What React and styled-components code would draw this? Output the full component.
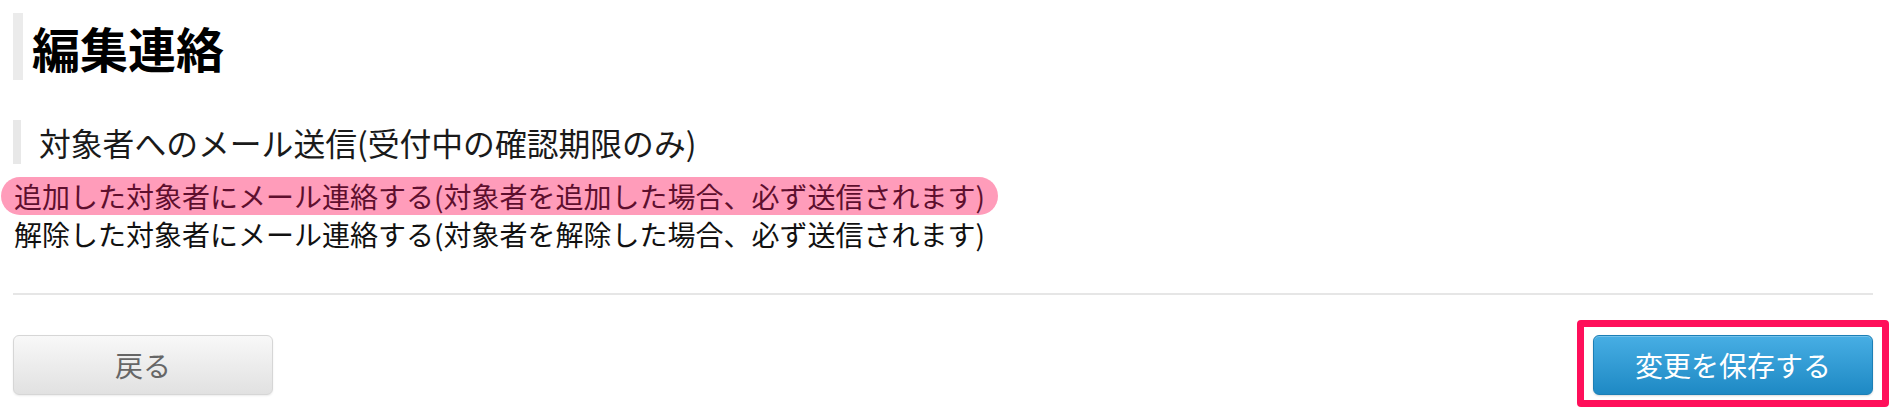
import React from "react";
import styled, { createGlobalStyle } from "styled-components";

const GlobalStyle = createGlobalStyle`
  html, body {
    margin: 0;
    padding: 0;
    background: #fff;
  }
  body {
    font-family: "Noto Sans CJK JP", "Noto Sans", sans-serif;
    color: #111;
  }
`;

const App = () => {
  return (
    <>
      <GlobalStyle />
      <Page>
        <Title>編集連絡</Title>
        <SubTitle>対象者へのメール送信(受付中の確認期限のみ)</SubTitle>
        <Options>
          <Option highlighted>
            追加した対象者にメール連絡する(対象者を追加した場合、必ず送信されます)
          </Option>
          <Option>
            解除した対象者にメール連絡する(対象者を解除した場合、必ず送信されます)
          </Option>
        </Options>
        <Divider />
        <Footer>
          <BackButton>戻る</BackButton>
          <Marked>
            <SaveButton>変更を保存する</SaveButton>
          </Marked>
        </Footer>
      </Page>
    </>
  );
};

export default App;

const Page = styled.div`
  box-sizing: border-box;
  height: 408px;
  padding: 13px 17px 0 13px;
  display: flex;
  flex-direction: column;
`;

const Title = styled.h1`
  margin: 0;
  height: 67px;
  border-left: 10px solid #ebebeb;
  padding-left: 9px;
  font-size: 48px;
  font-weight: 700;
  line-height: 69px;
  color: #000;
`;

const SubTitle = styled.h2`
  margin: 40px 0 0;
  height: 44px;
  border-left: 8px solid #e8e8e8;
  padding-left: 18px;
  font-size: 31.8px;
  font-weight: 400;
  line-height: 44px;
  color: #1a1a1a;
`;

const Options = styled.div`
  margin-top: 13px;
  display: flex;
  flex-direction: column;
  align-items: flex-start;
`;

const Option = styled.span`
  font-size: 28px;
  line-height: 38px;
  height: 38px;
  white-space: nowrap;
  color: ${(p) => (p.highlighted ? "#5e0f2e" : "#111")};
  background: ${(p) => (p.highlighted ? "#ff9cba" : "transparent")};
  border-radius: 19px;
  margin-left: -12px;
  padding: 0 13px 0 13px;
`;

const Divider = styled.hr`
  margin: 40px 0 0;
  flex-shrink: 0;
  border: none;
  height: 2px;
  background: #e6e6e6;
`;

const Footer = styled.div`
  margin-top: 40px;
  display: flex;
  justify-content: space-between;
  align-items: flex-start;
`;

const Button = styled.button`
  height: 60px;
  border-radius: 6px;
  font-family: "Noto Sans CJK JP", "Noto Sans", sans-serif;
  font-size: 28px;
  line-height: 1;
  cursor: pointer;
  box-sizing: border-box;
`;

const BackButton = styled(Button)`
  width: 260px;
  color: #666;
  border: 1px solid #d6d6d6;
  background: linear-gradient(#f8f8f8, #e1e1e1);
  box-shadow: 0 1px 2px rgba(0, 0, 0, 0.08);
`;

const Marked = styled.div`
  position: relative;

  &::after {
    content: "";
    position: absolute;
    inset: -15px -16px -12px -16px;
    border: 7px solid #ff0f5a;
    border-radius: 4px;
    pointer-events: none;
  }
`;

const SaveButton = styled(Button)`
  width: 280px;
  color: #fff;
  border: 1px solid #1c7fb6;
  background: linear-gradient(#47aee4, #1e89c4);
  box-shadow: inset 0 1px 0 rgba(255, 255, 255, 0.25), 0 1px 2px rgba(0, 0, 0, 0.15);
`;
